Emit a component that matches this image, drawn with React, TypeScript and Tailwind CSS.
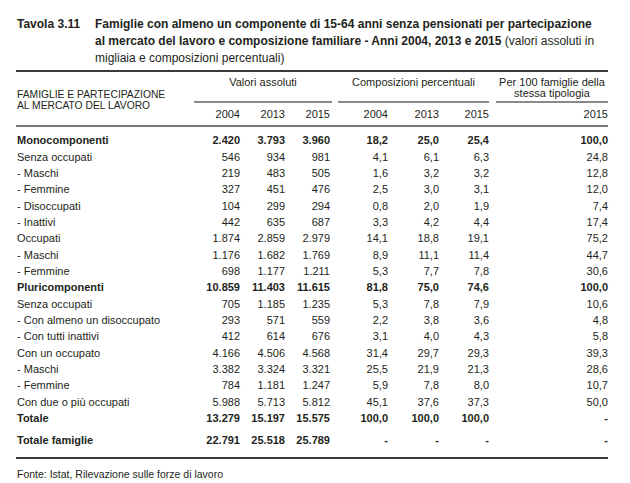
import React from 'react';

type Row = { label: string; values: string[]; bold?: boolean };

const rows: Row[] = [
  { label: 'Monocomponenti', values: ['2.420', '3.793', '3.960', '18,2', '25,0', '25,4', '100,0'], bold: true },
  { label: 'Senza occupati', values: ['546', '934', '981', '4,1', '6,1', '6,3', '24,8'] },
  { label: '- Maschi', values: ['219', '483', '505', '1,6', '3,2', '3,2', '12,8'] },
  { label: '- Femmine', values: ['327', '451', '476', '2,5', '3,0', '3,1', '12,0'] },
  { label: '- Disoccupati', values: ['104', '299', '294', '0,8', '2,0', '1,9', '7,4'] },
  { label: '- Inattivi', values: ['442', '635', '687', '3,3', '4,2', '4,4', '17,4'] },
  { label: 'Occupati', values: ['1.874', '2.859', '2.979', '14,1', '18,8', '19,1', '75,2'] },
  { label: '- Maschi', values: ['1.176', '1.682', '1.769', '8,9', '11,1', '11,4', '44,7'] },
  { label: '- Femmine', values: ['698', '1.177', '1.211', '5,3', '7,7', '7,8', '30,6'] },
  { label: 'Pluricomponenti', values: ['10.859', '11.403', '11.615', '81,8', '75,0', '74,6', '100,0'], bold: true },
  { label: 'Senza occupati', values: ['705', '1.185', '1.235', '5,3', '7,8', '7,9', '10,6'] },
  { label: '- Con almeno un disoccupato', values: ['293', '571', '559', '2,2', '3,8', '3,6', '4,8'] },
  { label: '- Con tutti inattivi', values: ['412', '614', '676', '3,1', '4,0', '4,3', '5,8'] },
  { label: 'Con un occupato', values: ['4.166', '4.506', '4.568', '31,4', '29,7', '29,3', '39,3'] },
  { label: '- Maschi', values: ['3.382', '3.324', '3.321', '25,5', '21,9', '21,3', '28,6'] },
  { label: '- Femmine', values: ['784', '1.181', '1.247', '5,9', '7,8', '8,0', '10,7'] },
  { label: 'Con due o più occupati', values: ['5.988', '5.713', '5.812', '45,1', '37,6', '37,3', '50,0'] },
  { label: 'Totale', values: ['13.279', '15.197', '15.575', '100,0', '100,0', '100,0', '-'], bold: true },
];

const totaleFamiglie: Row = {
  label: 'Totale famiglie',
  values: ['22.791', '25.518', '25.789', '-', '-', '-', '-'],
  bold: true,
};

// label + 3 valori assoluti + 3 composizioni + per 100 famiglie
const cols = 'grid grid-cols-[178px_46px_45px_45px_58px_51px_50px_119px]';

const DataRow = ({ row }: { row: Row }) => (
  <div className={`${cols} h-[16.35px] items-center leading-[12px] ${row.bold ? 'font-bold' : ''}`}>
    <div className="pl-[1px] whitespace-nowrap">{row.label}</div>
    {row.values.map((v, i) => (
      <div key={i} className="text-right whitespace-nowrap">
        {v}
      </div>
    ))}
  </div>
);

export default function App() {
  return (
    <div className="w-[630px] h-[483px] bg-white pl-[16px] pr-[22px] font-['Liberation_Sans',Arial,sans-serif] text-[#231f20] overflow-hidden">
      {/* Titolo */}
      <div className="flex pt-[16px] text-[12px] leading-[17px]">
        <div className="w-[79px] shrink-0 pl-[1px] font-bold">Tavola 3.11</div>
        <div className="whitespace-nowrap">
          <div className="font-bold">Famiglie con almeno un componente di 15-64 anni senza pensionati per partecipazione</div>
          <div>
            <span className="font-bold">al mercato del lavoro e composizione familiare - Anni 2004, 2013 e 2015</span> (valori assoluti in
          </div>
          <div>migliaia e composizioni percentuali)</div>
        </div>
      </div>

      <div className="mt-[3px] h-[2px] bg-[#3a3a3a]" />

      {/* Intestazione */}
      <div className={`${cols} grid-rows-[31px_22px] text-[11px] leading-[11px]`}>
        <div className="row-span-2 flex flex-col justify-center pl-[1px] pt-[2px] text-[10.3px] leading-[11px] whitespace-nowrap">
          <div>FAMIGLIE E PARTECIPAZIONE</div>
          <div>AL MERCATO DEL LAVORO</div>
        </div>
        <div className="col-span-3 mr-[-2px] border-b-2 border-[#8a8a8a] pt-[5px] text-center">Valori assoluti</div>
        <div className="col-span-3 ml-[8px] border-b-2 border-[#8a8a8a] pt-[5px] text-center">Composizioni percentuali</div>
        <div className="ml-[7px] border-b-2 border-[#8a8a8a] pt-[5px] text-center">
          Per 100 famiglie della
          <br />
          stessa tipologia
        </div>
        {['2004', '2013', '2015', '2004', '2013', '2015', '2015'].map((y, i) => (
          <div key={i} className="flex items-center justify-end">
            {y}
          </div>
        ))}
      </div>

      <div className="h-[2px] bg-[#777]" />

      {/* Corpo */}
      <div className="pt-[5px] text-[11px]">
        {rows.map((r, i) => (
          <DataRow key={i} row={r} />
        ))}
        <div className="mt-[6px]">
          <DataRow row={totaleFamiglie} />
        </div>
      </div>

      <div className="mt-[8px] h-[2px] bg-[#3a3a3a]" />

      <div className="mt-[9px] pl-[1px] text-[10.5px] leading-[12px]">Fonte: Istat, Rilevazione sulle forze di lavoro</div>
    </div>
  );
}
